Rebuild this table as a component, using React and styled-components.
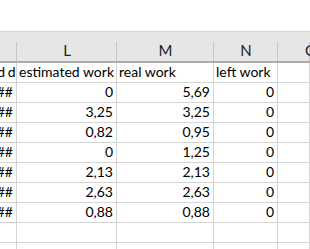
import React from 'react';
import styled, { createGlobalStyle } from 'styled-components';

const GlobalStyle = createGlobalStyle`
  html, body {
    margin: 0;
    padding: 0;
    background: #fff;
    overflow: hidden;
  }
  body {
    font-family: Lato, 'Open Sans', 'Liberation Sans', sans-serif;
  }
`;

const COLUMNS = '17px 100px 97px 64px 1fr';

const rows = [
  ['0', '5,69', '0'],
  ['3,25', '3,25', '0'],
  ['0,82', '0,95', '0'],
  ['0', '1,25', '0'],
  ['2,13', '2,13', '0'],
  ['2,63', '2,63', '0'],
  ['0,88', '0,88', '0'],
];

const App = () => (
  <>
    <GlobalStyle />
    <Sheet>
      <Ribbon />
      <HeaderRow>
        <HeaderCell />
        <HeaderCell>L</HeaderCell>
        <HeaderCell>M</HeaderCell>
        <HeaderCell>N</HeaderCell>
        <HeaderCell $edge>O</HeaderCell>
      </HeaderRow>
      <Grid>
        <Cell $align="end" $tight>
          d d
        </Cell>
        <Cell>estimated work</Cell>
        <Cell>real work</Cell>
        <Cell>left work</Cell>
        <Cell />
        {rows.map((row, i) => (
          <React.Fragment key={i}>
            <Cell $align="end">########</Cell>
            {row.map((value, j) => (
              <Cell key={j} $align="end">
                {value}
              </Cell>
            ))}
            <Cell />
          </React.Fragment>
        ))}
        {[0, 1].map((i) => (
          <React.Fragment key={`empty${i}`}>
            <Cell />
            <Cell />
            <Cell />
            <Cell />
            <Cell />
          </React.Fragment>
        ))}
      </Grid>
    </Sheet>
  </>
);

const Sheet = styled.div`
  width: 310px;
  height: 249px;
  overflow: hidden;
  background: #fff;
`;

const Ribbon = styled.div`
  height: 31px;
  background: #fff;
`;

const HeaderRow = styled.div`
  display: grid;
  grid-template-columns: ${COLUMNS};
  height: 29px;
  background: #e6e6e6;
  border-top: 1px solid #d5d5d5;
  border-bottom: 2px solid #ababab;
`;

const HeaderCell = styled.div`
  display: flex;
  align-items: flex-end;
  justify-content: ${({ $edge }) => ($edge ? 'flex-start' : 'center')};
  padding: 0 0 3px ${({ $edge }) => ($edge ? '27px' : '0')};
  font-size: 15px;
  line-height: 15px;
  color: #222;
  white-space: nowrap;
  overflow: hidden;
  background: linear-gradient(#c4c4c4, #c4c4c4) no-repeat right bottom / 1px 19px;
`;

const Grid = styled.div`
  display: grid;
  grid-template-columns: ${COLUMNS};
  grid-auto-rows: 20px;
`;

const Cell = styled.div`
  display: flex;
  align-items: flex-end;
  justify-content: ${({ $align }) => ($align === 'end' ? 'flex-end' : 'flex-start')};
  padding: 0 ${({ $tight }) => ($tight ? '1px' : '3px')} 3px 2px;
  border-right: 1px solid #d4d4d4;
  border-bottom: 1px solid #d4d4d4;
  font-size: 14px;
  line-height: 15px;
  letter-spacing: ${({ $tight }) => ($tight ? '-0.5px' : '0')};
  color: #000;
  white-space: nowrap;
  overflow: hidden;
`;

export default App;
